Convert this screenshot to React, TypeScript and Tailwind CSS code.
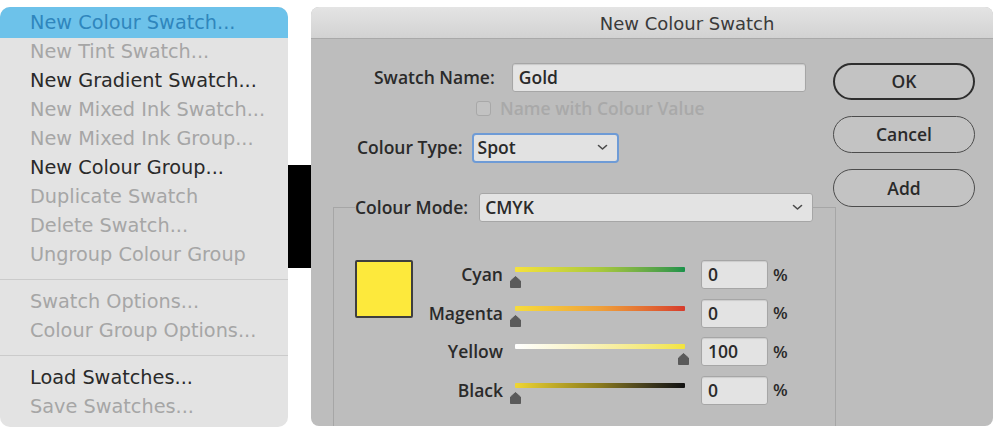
import React from 'react';

type MenuItem = { label: string; state: 'active' | 'enabled' | 'disabled' } | { sep: true };

const menuItems: MenuItem[] = [
  { label: 'New Colour Swatch...', state: 'active' },
  { label: 'New Tint Swatch...', state: 'disabled' },
  { label: 'New Gradient Swatch...', state: 'enabled' },
  { label: 'New Mixed Ink Swatch...', state: 'disabled' },
  { label: 'New Mixed Ink Group...', state: 'disabled' },
  { label: 'New Colour Group...', state: 'enabled' },
  { label: 'Duplicate Swatch', state: 'disabled' },
  { label: 'Delete Swatch...', state: 'disabled' },
  { label: 'Ungroup Colour Group', state: 'disabled' },
  { sep: true },
  { label: 'Swatch Options...', state: 'disabled' },
  { label: 'Colour Group Options...', state: 'disabled' },
  { sep: true },
  { label: 'Load Swatches...', state: 'enabled' },
  { label: 'Save Swatches...', state: 'disabled' },
];

const sliders = [
  { name: 'Cyan', value: '0', track: 'bg-gradient-to-r from-[#f6e23c] via-[#a8c83c] to-[#17924a]', thumb: 'left' },
  { name: 'Magenta', value: '0', track: 'bg-gradient-to-r from-[#f6dc3c] via-[#eea03a] to-[#d63a2c]', thumb: 'left' },
  { name: 'Yellow', value: '100', track: 'bg-gradient-to-r from-[#ffffff] via-[#f8f0b0] to-[#f2e43c]', thumb: 'right' },
  { name: 'Black', value: '0', track: 'bg-gradient-to-r from-[#efd634] via-[#8a7a1c] to-[#111111]', thumb: 'left' },
];

const Chevron = () => (
  <svg width="11" height="7" viewBox="0 0 11 7" fill="none">
    <path d="M1.5 1.5 L5.5 5 L9.5 1.5" stroke="#4a4a4a" strokeWidth="1.6" strokeLinecap="round" strokeLinejoin="round" />
  </svg>
);

const Thumb = () => (
  <svg width="11" height="12" viewBox="0 0 11 12">
    <path d="M5.5 0.5 L10.5 5 V11.5 H0.5 V5 Z" fill="#5a5a5a" strokeLinejoin="round" stroke="#5a5a5a" />
  </svg>
);

const SwatchMenu = () => (
  <div className="w-[288px] h-[420px] bg-[#e3e3e3] rounded-[10px] overflow-hidden font-['DejaVu_Sans',sans-serif] text-[19.3px]">
    {menuItems.map((item, i) =>
      'sep' in item ? (
        <div key={i} className="h-[18px] flex items-center">
          <div className="w-full h-px bg-[#cbcbcb]" />
        </div>
      ) : (
        <div
          key={i}
          className={`pl-[30px] flex items-center whitespace-nowrap ${
            item.state === 'active'
              ? 'bg-[#6dc2ea] text-[#2f86bd] h-[31px] pt-[1px]'
              : item.state === 'enabled'
              ? 'text-[#2a2a2a] h-[29px]'
              : 'text-[#a6a6a6] h-[29px]'
          }`}
        >
          {item.label}
        </div>
      )
    )}
  </div>
);

const SwatchDialog = () => (
  <div className="w-[682px] h-[419px] bg-[#bdbdbd] rounded-[8px] overflow-hidden font-['Open_Sans',sans-serif] text-[17.5px] font-semibold text-[#2a2a2a]">
    {/* title bar */}
    <div className="h-[32px] bg-gradient-to-b from-[#e4e4e4] to-[#d2d2d2] border-b border-[#a9a9a9] flex items-center justify-center pl-[70px] pt-[1px]">
      <span className="font-['DejaVu_Sans',sans-serif] font-normal text-[18px] text-[#3a3a3a]">New Colour Swatch</span>
    </div>

    <div className="flex">
      {/* left side */}
      <div className="w-[522px] pt-[24px]">
        <div className="flex items-center h-[29px] pl-[63px]">
          <span>Swatch Name:</span>
          <div className="ml-[17px] w-[294px] h-[29px] bg-[#e4e4e4] border border-[#a6a6a6] rounded-[3px] shadow-[inset_0_1px_1px_rgba(0,0,0,0.12)] flex items-center pl-[6px]">
            Gold
          </div>
        </div>

        <div className="flex items-center h-[17px] mt-[8px] pl-[165px]">
          <div className="w-[15px] h-[15px] border border-[#a8a8a8] rounded-[3px] bg-[#c2c2c2]" />
          <span className="ml-[9px] text-[#a9a9a9]">Name with Colour Value</span>
        </div>

        <div className="flex items-center h-[29px] mt-[16px] pl-[46px]">
          <span>Colour Type:</span>
          <div className="ml-[9px] w-[147px] h-[30px] bg-[#e2e2e2] border-2 border-[#6e9bd6] rounded-[4px] flex items-center justify-between pl-[4px] pr-[9px]">
            <span>Spot</span>
            <Chevron />
          </div>
        </div>

        <fieldset className="ml-[22px] mt-[31px] w-[503px] h-[250px] border border-[#a6a6a6]">
          <legend className="ml-[21px] flex items-center">
            <span>Colour Mode:</span>
            <div className="ml-[11px] w-[334px] h-[29px] bg-[#e3e3e3] border border-[#a6a6a6] rounded-[3px] flex items-center justify-between pl-[5px] pr-[9px]">
              <span>CMYK</span>
              <Chevron />
            </div>
          </legend>

          <div className="flex items-start pl-[21px] pt-[38px]">
            <div className="w-[58px] h-[58px] bg-[#fde93c] border-2 border-[#3e3e3e] rounded-[2px]" />
            <div className="flex flex-col gap-[9.5px]">
              {sliders.map((s) => (
                <div key={s.name} className="flex items-center h-[29px]">
                  <span className="w-[90px] text-right">{s.name}</span>
                  <div className="relative ml-[9px] w-[182px] h-[29px]">
                    <div className={`absolute left-[3px] top-[7px] w-[170px] h-[5px] rounded-[1px] ${s.track}`} />
                    <div className={`absolute top-[16px] ${s.thumb === 'left' ? 'left-[-2px]' : 'left-[166px]'}`}>
                      <Thumb />
                    </div>
                  </div>
                  <div className="ml-[7px] w-[67px] h-[29px] bg-[#e3e3e3] border border-[#a6a6a6] rounded-[3px] shadow-[inset_0_1px_1px_rgba(0,0,0,0.1)] flex items-center pl-[6px]">
                    {s.value}
                  </div>
                  <span className="ml-[5px] text-[17px]">%</span>
                </div>
              ))}
            </div>
          </div>
        </fieldset>
      </div>

      {/* buttons */}
      <div className="w-[142px] pt-[24px] flex flex-col gap-[16px]">
        <div className="h-[37px] rounded-full border-[2.5px] border-[#2e2e2e] bg-[#c3c3c3] flex items-center justify-center">OK</div>
        <div className="h-[37px] rounded-full border-[1.5px] border-[#4c4c4c] bg-[#c3c3c3] flex items-center justify-center">Cancel</div>
        <div className="h-[38px] rounded-full border-[1.5px] border-[#4c4c4c] bg-[#c3c3c3] flex items-center justify-center">Add</div>
      </div>
    </div>
  </div>
);

export default function App() {
  return (
    <div className="w-[1000px] h-[438px] bg-white flex pt-[7px] overflow-hidden">
      <SwatchMenu />
      <div className="w-[23px] pt-[158px]">
        <div className="h-[103px] bg-black" />
      </div>
      <SwatchDialog />
    </div>
  );
}
